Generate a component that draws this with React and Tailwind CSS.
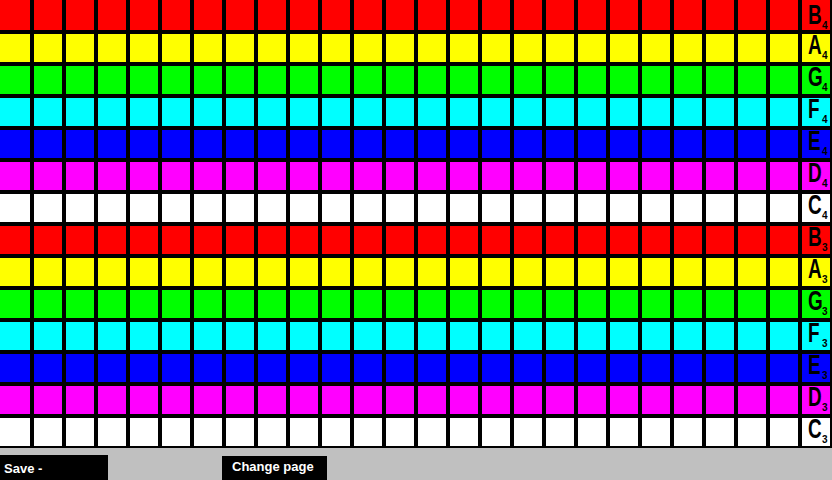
const rows = [
  { bg: 'bg-[#ff0000]', note: 'B', oct: '4' },
  { bg: 'bg-[#ffff00]', note: 'A', oct: '4' },
  { bg: 'bg-[#00ff00]', note: 'G', oct: '4' },
  { bg: 'bg-[#00ffff]', note: 'F', oct: '4' },
  { bg: 'bg-[#0000ff]', note: 'E', oct: '4' },
  { bg: 'bg-[#ff00ff]', note: 'D', oct: '4' },
  { bg: 'bg-white', note: 'C', oct: '4' },
  { bg: 'bg-[#ff0000]', note: 'B', oct: '3' },
  { bg: 'bg-[#ffff00]', note: 'A', oct: '3' },
  { bg: 'bg-[#00ff00]', note: 'G', oct: '3' },
  { bg: 'bg-[#00ffff]', note: 'F', oct: '3' },
  { bg: 'bg-[#0000ff]', note: 'E', oct: '3' },
  { bg: 'bg-[#ff00ff]', note: 'D', oct: '3' },
  { bg: 'bg-white', note: 'C', oct: '3' },
]

const steps = Array.from({ length: 25 }, (_, i) => i)

export default function App() {
  return (
    <div className="w-[832px] h-[480px] bg-[#c0c0c0] overflow-hidden" style={{ fontFamily: '"Liberation Sans", Arial, sans-serif' }}>
      <div className="flex flex-col">
        {rows.map((row, r) => (
          <div key={r} className="flex h-[32px]">
            {steps.map((s) => (
              <div
                key={s}
                className={`w-[32px] h-[32px] border-2 border-black ${row.bg} ${s === 0 ? 'border-l-0' : ''} ${r === 0 ? 'border-t-0' : ''}`}
              />
            ))}
            <div className={`relative w-[32px] h-[32px] border-2 border-black ${row.bg} ${r === 0 ? 'border-t-0 pt-[4px]' : ''}`}>
              <div className="relative">
                <span className="absolute left-[6px] top-[-2px] text-[27px] leading-none font-bold text-black scale-x-[0.7] origin-left inline-block">
                  {row.note}
                </span>
                <span className="absolute left-[20px] top-[17px] text-[10px] leading-none font-bold text-black">
                  {row.oct}
                </span>
              </div>
            </div>
          </div>
        ))}
      </div>
      <div className="flex h-[32px] items-end">
        <div className="w-[108px] h-[25px] bg-black text-white text-[13px] font-bold pl-[4px] pt-[7px] leading-none">
          Save -
        </div>
        <div className="ml-[114px] w-[105px] h-[24px] bg-black text-white text-[13px] font-bold pl-[10px] pt-[4px] leading-none">
          Change page
        </div>
      </div>
    </div>
  )
}
